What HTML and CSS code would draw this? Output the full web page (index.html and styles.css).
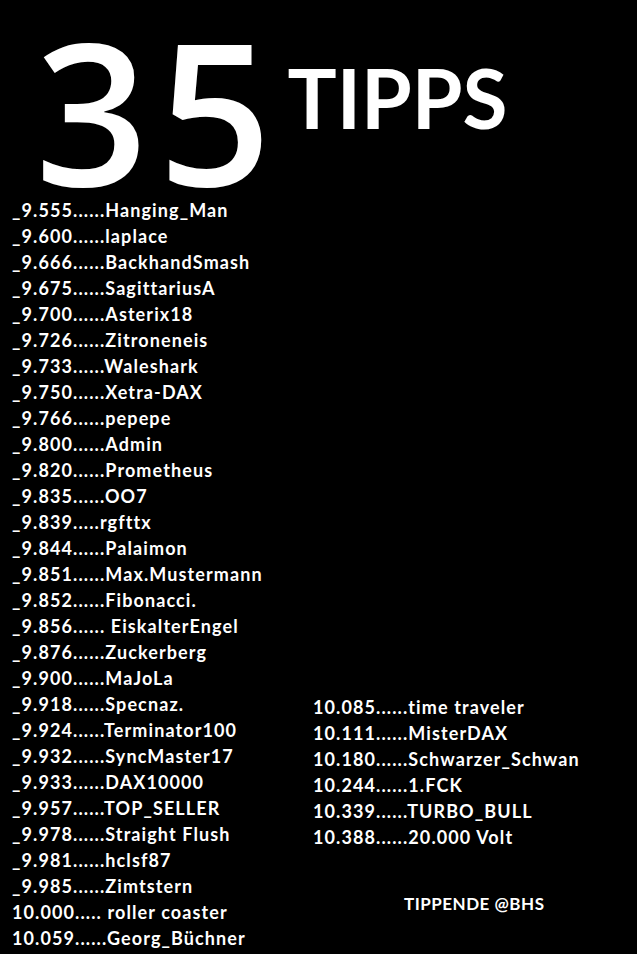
FILE: index.html
```html
<!DOCTYPE html>
<html lang="de">
<head>
<meta charset="utf-8">
<title>35 Tipps</title>
<link rel="stylesheet" href="styles.css">
</head>
<body>
<div class="page">
  <header class="header">
    <div class="big">35</div>
    <div class="tipps">TIPPS</div>
  </header>
  <div class="cols">
    <ul class="list left">
      <li>_9.555......Hanging_Man</li>
      <li>_9.600......laplace</li>
      <li>_9.666......BackhandSmash</li>
      <li>_9.675......SagittariusA</li>
      <li>_9.700......Asterix18</li>
      <li>_9.726......Zitroneneis</li>
      <li>_9.733......Waleshark</li>
      <li>_9.750......Xetra-DAX</li>
      <li>_9.766......pepepe</li>
      <li>_9.800......Admin</li>
      <li>_9.820......Prometheus</li>
      <li>_9.835......OO7</li>
      <li>_9.839.....rgfttx</li>
      <li>_9.844......Palaimon</li>
      <li>_9.851......Max.Mustermann</li>
      <li>_9.852......Fibonacci.</li>
      <li>_9.856...... EiskalterEngel</li>
      <li>_9.876......Zuckerberg</li>
      <li>_9.900......MaJoLa</li>
      <li>_9.918......Specnaz.</li>
      <li>_9.924......Terminator100</li>
      <li>_9.932......SyncMaster17</li>
      <li>_9.933......DAX10000</li>
      <li>_9.957......TOP_SELLER</li>
      <li>_9.978......Straight Flush</li>
      <li>_9.981......hclsf87</li>
      <li>_9.985......Zimtstern</li>
      <li>10.000..... roller coaster</li>
      <li>10.059......Georg_Büchner</li>
    </ul>
    <div class="right">
      <ul class="list">
        <li>10.085......time traveler</li>
        <li>10.111......MisterDAX</li>
        <li>10.180......Schwarzer_Schwan</li>
        <li>10.244......1.FCK</li>
        <li>10.339......TURBO_BULL</li>
        <li>10.388......20.000 Volt</li>
      </ul>
      <div class="footer">TIPPENDE @BHS</div>
    </div>
  </div>
</div>
</body>
</html>
```
FILE: styles.css
```css
html, body {
  margin: 0;
  padding: 0;
  background: #000;
}
.page {
  width: 637px;
  height: 954px;
  overflow: hidden;
  background: #000;
  color: #fff;
  font-family: Lato, "Open Sans", sans-serif;
  font-weight: 700;
}
.header {
  display: flex;
  align-items: flex-start;
  height: 197px;
}
.big {
  font-family: "Open Sans", "Liberation Sans", sans-serif;
  font-weight: 600;
  font-size: 198px;
  line-height: 170px;
  letter-spacing: 10px;
  margin-left: 35px;
  margin-top: 24px;
}
.tipps {
  font-size: 82px;
  line-height: 82px;
  margin-left: 6px;
  margin-top: 56px;
}
.cols {
  display: flex;
}
.list {
  list-style: none;
  margin: 0;
  padding: 0;
  font-size: 18px;
  line-height: 26px;
  letter-spacing: 1.1px;
}
.list li {
  white-space: pre;
  height: 26px;
}
.left {
  padding-left: 12px;
  width: 301px;
}
.right {
  padding-top: 497px;
}
.footer {
  font-size: 17px;
  line-height: 20px;
  letter-spacing: 0.5px;
  margin-top: 44px;
  margin-left: 91px;
}
```
